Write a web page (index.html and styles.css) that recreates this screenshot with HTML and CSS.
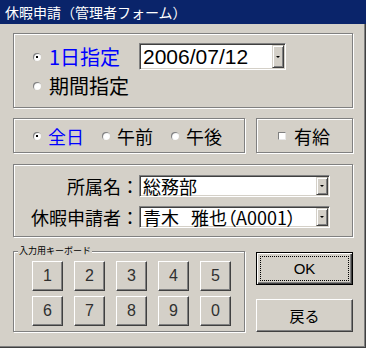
FILE: index.html
```html
<!DOCTYPE html>
<html lang="ja">
<head>
<meta charset="utf-8">
<title>休暇申請</title>
<link rel="stylesheet" href="styles.css">
</head>
<body>
<div class="window">
  <div class="titlebar">休暇申請（管理者フォーム）</div>
  <div class="client">
    <div class="group g-date">
      <div class="row r1">
        <span class="radio on"></span>
        <span class="big blue lbl-date">1日指定</span>
        <div class="combo date"><span class="ctext">2006/07/12</span><span class="drop"><i></i></span></div>
      </div>
      <div class="row r2">
        <span class="radio"></span>
        <span class="big">期間指定</span>
      </div>
    </div>
    <div class="row-mid">
      <div class="group g-time">
        <span class="radio on"></span><span class="opt blue">全日</span>
        <span class="radio"></span><span class="opt">午前</span>
        <span class="radio"></span><span class="opt">午後</span>
      </div>
      <div class="group g-paid">
        <span class="check"></span><span class="opt">有給</span>
      </div>
    </div>
    <div class="group g-person">
      <span class="flabel">所属名：</span>
      <div class="combo small"><span class="ctext">総務部</span><span class="drop"><i></i></span></div>
      <span class="flabel">休暇申請者：</span>
      <div class="combo small"><span class="ctext palt">青木<span class="narrow-space">　</span>雅也（A0001）</span><span class="drop"><i></i></span></div>
    </div>
    <div class="bottom">
      <fieldset class="keyboard">
        <legend>入力用キーボード</legend>
        <div class="keys">
          <button class="btn key">1</button>
          <button class="btn key">2</button>
          <button class="btn key">3</button>
          <button class="btn key">4</button>
          <button class="btn key">5</button>
          <button class="btn key">6</button>
          <button class="btn key">7</button>
          <button class="btn key">8</button>
          <button class="btn key">9</button>
          <button class="btn key">0</button>
        </div>
      </fieldset>
      <div class="actions">
        <button class="btn act ok">OK</button>
        <button class="btn act">戻る</button>
      </div>
    </div>
  </div>
</div>
</body>
</html>
```
FILE: styles.css
```css
* { box-sizing: border-box; }
html, body { margin: 0; padding: 0; }
body {
  background: #d4d0c8;
  font-family: "Noto Sans CJK JP", sans-serif;
  color: #000;
}
.window {
  width: 366px;
  height: 348px;
  display: flex;
  flex-direction: column;
  overflow: hidden;
  background: #d4d0c8;
}
.titlebar {
  flex: none;
  height: 24px;
  background: #0a246a;
  color: #fff;
  font-size: 14px;
  line-height: 24px;
  padding-left: 5px;
  white-space: nowrap;
}
.client {
  flex: 1;
  padding: 9px 0 0 13px;
  border-right: 1px solid #404040;
  border-bottom: 1px solid #404040;
  box-shadow: inset -1px -1px #808080;
}
.group {
  border: 1px solid #808080;
  box-shadow: inset 1px 1px #fff, 1px 1px #fff;
}
.g-date {
  width: 340px;
  height: 75px;
  padding: 9px 0 0 19px;
  display: flex;
  flex-direction: column;
  gap: 5px;
}
.row {
  display: flex;
  align-items: center;
}
.r1 { height: 27px; }
.r2 { height: 22px; }
.radio {
  flex: none;
  position: relative;
  width: 8px;
  height: 8px;
  border-radius: 50%;
  background: radial-gradient(circle at 60% 60%, #fff 35%, #d0d0d0 100%);
  box-shadow: inset 1px 1px #808080;
  margin-right: 8px;
}
.radio.on::after {
  content: "";
  position: absolute;
  left: 3px;
  top: 3px;
  width: 2px;
  height: 2px;
  background: #000;
}
.big {
  font-size: 20px;
  line-height: 22px;
  white-space: nowrap;
}
.blue { color: #0000ff; }
.lbl-date { width: 90px; }
.combo {
  display: flex;
  align-items: center;
  background: #fff;
  border: 1px solid;
  border-color: #808080 #fff #fff #808080;
  box-shadow: inset 1px 1px #404040, inset -1px -1px #d4d0c8;
  padding: 1px;
}
.combo.date {
  width: 147px;
  height: 27px;
}
.ctext {
  flex: 1;
  padding-left: 2px;
  white-space: nowrap;
}
.date .ctext {
  font-family: "Liberation Sans", sans-serif;
  font-size: 21px;
  line-height: 23px;
}
.drop {
  flex: none;
  align-self: stretch;
  width: 12px;
  background: #d4d0c8;
  border: 1px solid;
  border-color: #d4d0c8 #404040 #404040 #d4d0c8;
  box-shadow: inset 1px 1px #fff, inset -1px -1px #808080;
  display: flex;
  align-items: center;
  justify-content: center;
}
.drop i {
  display: block;
  width: 0;
  height: 0;
  border-left: 2px solid transparent;
  border-right: 2px solid transparent;
  border-top: 2px solid #000;
}
.row-mid {
  display: flex;
  gap: 11px;
  margin-top: 10px;
}
.g-time {
  width: 232px;
  height: 35px;
  padding-left: 19px;
  display: flex;
  align-items: center;
}
.radio + .opt { margin-left: -1px; }
.opt {
  font-size: 18px;
  line-height: 20px;
  margin-right: 18px;
  white-space: nowrap;
}
.g-paid {
  width: 97px;
  height: 35px;
  padding-left: 21px;
  display: flex;
  align-items: center;
}
.check {
  flex: none;
  width: 8px;
  height: 8px;
  background: #fff;
  border: 1px solid;
  border-color: #808080 #e8e8e8 #e8e8e8 #808080;
  margin-right: 8px;
}
.g-person {
  width: 340px;
  height: 73px;
  margin-top: 11px;
  padding-top: 10px;
  display: grid;
  grid-template-columns: 125px 191px;
  grid-auto-rows: 22px;
  row-gap: 9px;
  align-items: center;
}
.flabel {
  text-align: right;
  font-size: 18px;
  line-height: 20px;
  white-space: nowrap;
}
.combo.small {
  height: 22px;
}
.small .ctext {
  font-size: 18px;
  line-height: 18px;
}
.palt { font-feature-settings: "palt"; }
.narrow-space { margin-right: -6px; }
.bottom {
  display: flex;
  gap: 11px;
  margin-top: 9px;
}
.keyboard {
  width: 232px;
  height: 86px;
  margin: 0;
  padding: 5px 0 5px 0;
  border: 1px solid #808080;
  box-shadow: inset 1px 1px #fff, 1px 1px #fff;
  min-inline-size: 0;
}
.keyboard legend {
  font-size: 9px;
  line-height: 10px;
  padding: 0 1px;
  margin-left: 4px;
  background: #d4d0c8;
  white-space: nowrap;
}
.keys {
  padding-left: 18px;
  display: grid;
  grid-template-columns: repeat(5, 31px);
  grid-auto-rows: 30px;
  column-gap: 11px;
  row-gap: 5px;
}
.btn {
  margin: 0;
  padding: 0;
  background: #d4d0c8;
  border: 1px solid;
  border-color: #fff #404040 #404040 #fff;
  box-shadow: inset -1px -1px #808080;
  font-family: "Liberation Sans", "Noto Sans CJK JP", sans-serif;
  color: #000;
  position: relative;
}
.key {
  font-size: 16px;
  color: #303030;
}
.actions {
  display: flex;
  flex-direction: column;
  gap: 14px;
  padding-top: 6px;
}
.act {
  width: 97px;
  height: 33px;
  font-size: 15px;
}
.act.ok {
  border: 1px solid #000;
  box-shadow: inset 1px 1px #fff, inset -1px -1px #404040, inset -2px -2px #808080;
}
.act.ok::after {
  content: "";
  position: absolute;
  left: 3px;
  top: 3px;
  right: 3px;
  bottom: 3px;
  border: 1px dotted #000;
}
```
